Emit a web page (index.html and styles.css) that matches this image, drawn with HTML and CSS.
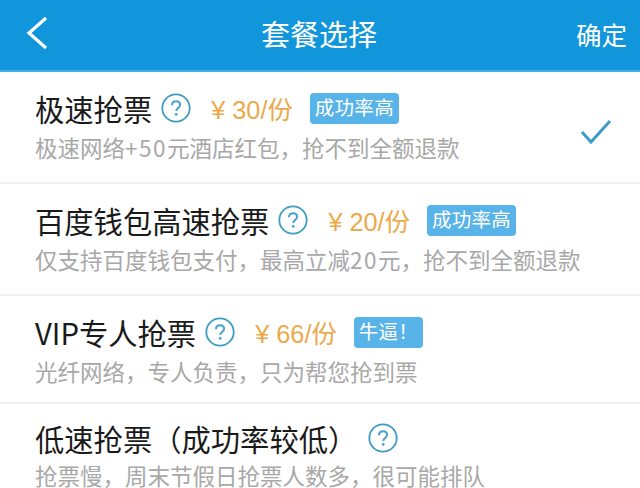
FILE: index.html
```html
<!DOCTYPE html>
<html lang="zh-CN">
<head>
  <meta charset="UTF-8" />
  <title>套餐选择</title>
  <link rel="stylesheet" href="styles.css">
</head>
<body>
  <svg class="defs" width="0" height="0">
    <symbol id="help" viewBox="0 0 30 30">
      <circle cx="15" cy="15" r="13.7" fill="none" stroke="#3f9cc4" stroke-width="1.8"/>
      <path d="M11 12.2c0-2.4 1.8-3.9 4.1-3.9 2.3 0 4 1.4 4 3.5 0 1.6-.9 2.4-2.1 3.3-1.1.8-1.7 1.4-1.7 2.9" fill="none" stroke="#4aa3cc" stroke-width="2"/>
      <circle cx="15.2" cy="21.4" r="1.4" fill="#4aa3cc"/>
    </symbol>
  </svg>

  <div class="header">
    <svg class="back" width="22" height="34" viewBox="0 0 22 34">
      <path d="M20 2 L3 17 L20 32" fill="none" stroke="#fff" stroke-width="3.2"/>
    </svg>
    <div class="header-title">套餐选择</div>
    <div class="header-ok">确定</div>
  </div>

  <div class="list">
    <div class="item">
      <div class="item-body">
        <div class="title-row">
          <span class="name">极速抢票</span>
          <svg class="help"><use href="#help"/></svg>
          <span class="price">¥ 30/份</span>
          <span class="tag">成功率高</span>
        </div>
        <div class="desc">极速网络<span class="num">+50</span>元酒店红包，抢不到全额退款</div>
      </div>
      <svg class="check" width="32" height="26" viewBox="0 0 32 26">
        <path d="M2 13 L11 23 L30 2" fill="none" stroke="#3c9cc6" stroke-width="3"/>
      </svg>
    </div>

    <div class="item">
      <div class="item-body">
        <div class="title-row">
          <span class="name">百度钱包高速抢票</span>
          <svg class="help"><use href="#help"/></svg>
          <span class="price">¥ 20/份</span>
          <span class="tag">成功率高</span>
        </div>
        <div class="desc">仅支持百度钱包支付，最高立减<span class="num">20</span>元，抢不到全额退款</div>
      </div>
    </div>

    <div class="item item-3">
      <div class="item-body">
        <div class="title-row">
          <span class="name">VIP专人抢票</span>
          <svg class="help"><use href="#help"/></svg>
          <span class="price">¥ 66/份</span>
          <span class="tag">牛逼！</span>
        </div>
        <div class="desc">光纤网络，专人负责，只为帮您抢到票</div>
      </div>
    </div>

    <div class="item item-4">
      <div class="item-body">
        <div class="title-row">
          <span class="name">低速抢票（成功率较低）</span>
          <svg class="help"><use href="#help"/></svg>
        </div>
        <div class="desc">抢票慢，周末节假日抢票人数多，很可能排队</div>
      </div>
    </div>
  </div>
</body>
</html>
```

FILE: styles.css
```css
html, body {
  margin: 0;
  padding: 0;
  height: 100%;
  overflow: hidden;
  background-color: #fff;
  font-family: "Noto Sans CJK SC", "Liberation Sans", sans-serif;
}

.defs {
  display: none;
}

.header {
  display: flex;
  align-items: center;
  justify-content: space-between;
  height: 70px;
  padding: 0 13px 0 26px;
  background-color: #1296db;
  border-bottom: 2px solid #3fb0e6;
  color: #fff;
}

.back {
  margin-top: -4px;
}

.header-title {
  font-size: 29px;
  margin-top: -4px;
  margin-left: 14px;
}

.header-ok {
  font-size: 25.5px;
  margin-top: -4px;
}

.item {
  display: flex;
  align-items: flex-start;
  justify-content: space-between;
  box-sizing: border-box;
  height: 112px;
  padding: 17px 28px 0 35px;
  border-bottom: 2px solid #f0f0f0;
}

.item-3 {
  height: 108px;
}

.item-4 {
  height: 84px;
  padding-top: 15px;
  border-bottom: 0;
}

.title-row {
  display: flex;
  align-items: center;
  height: 38px;
}

.name {
  font-size: 29.3px;
  color: #1a1a1a;
}

.help {
  width: 30px;
  height: 30px;
  margin-left: 9px;
}

.item-4 .help {
  margin-left: 11px;
}

.price {
  font-size: 25.3px;
  color: #eaaa4c;
  margin-left: 20px;
  font-family: "Liberation Sans", "Noto Sans CJK SC", sans-serif;
}

.tag {
  margin-left: 17px;
  padding: 0 5px;
  height: 31px;
  line-height: 28px;
  font-size: 19.5px;
  letter-spacing: 0.3px;
  color: #fff;
  background-color: #58b4e8;
  border-radius: 4px;
}

.desc {
  margin-top: 3px;
  font-size: 22.5px;
  line-height: 34px;
  color: #a8a8a8;
}

.item-4 .desc {
  margin-top: 6px;
  line-height: 24px;
}

.num {
  letter-spacing: 1.5px;
}

.check {
  margin-top: 30px;
}
```
